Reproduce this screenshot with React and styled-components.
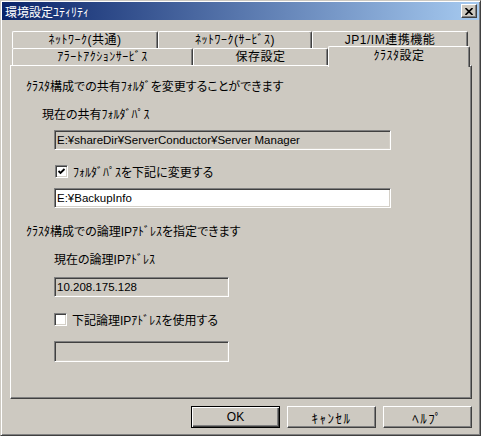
import React from 'react';
import styled, { createGlobalStyle, css } from 'styled-components';

const bg = '#cdc9c1';

const GlobalStyle = createGlobalStyle`
  html, body {
    margin: 0;
    padding: 0;
    background: ${bg};
  }
  body {
    font-family: "Liberation Sans", "Noto Sans CJK JP", sans-serif;
    font-size: 12px;
    font-feature-settings: "palt";
    color: #000;
  }
  * { box-sizing: border-box; }
`;

const Window = styled.div`
  width: 481px;
  height: 436px;
  display: flex;
  flex-direction: column;
  background: ${bg};
  border: 1px solid;
  border-color: ${bg} #404040 #404040 ${bg};
  box-shadow: inset 1px 1px #fff, inset -1px -1px #808080;
  padding: 1px;
`;

const TitleBar = styled.div`
  height: 18px;
  display: flex;
  align-items: center;
  justify-content: space-between;
  padding: 0 2px 0 3px;
  background: linear-gradient(to right, #0a246a, #a6caf0);
  color: #fff;
  font-size: 12px;
`;

const CloseButton = styled.div`
  width: 16px;
  height: 14px;
  display: flex;
  align-items: center;
  justify-content: center;
  background: ${bg};
  border: 1px solid;
  border-color: #fff #404040 #404040 #fff;
  box-shadow: inset -1px -1px #808080;
`;

const Body = styled.div`
  flex: 1;
  display: flex;
  flex-direction: column;
  padding: 11px 7px 0 8px;
`;

const TabRow = styled.div`
  display: flex;
  height: 17px;
  padding-left: 2px;
`;

const Tab = styled.div`
  width: ${p => p.$w}px;
  height: 17px;
  flex: none;
  text-align: center;
  line-height: 16px;
  letter-spacing: 0.5px;
  background: ${bg};
  border-top: 1px solid #fff;
  border-left: 1px solid #fff;
  border-right: 1px solid #404040;
  box-shadow: inset -1px 0 #808080;
  border-radius: 2px 2px 0 0;
  white-space: nowrap;
  ${p => p.$selected && css`
    position: relative;
    z-index: 1;
    height: 21px;
    margin-top: -2px;
    line-height: 18px;
  `}
`;

const Panel = styled.div`
  height: 334px;
  display: flex;
  flex-direction: column;
  padding: 14px 0 0 15px;
  border: 1px solid;
  border-color: #fff #404040 #404040 #fff;
  box-shadow: inset -1px -1px #808080;
`;

const Text = styled.div`
  height: 14px;
  line-height: 14px;
  white-space: nowrap;
  margin-top: ${p => p.$mt || 0}px;
  margin-left: ${p => p.$ml || 0}px;
`;

const Field = styled.div`
  width: ${p => p.$w}px;
  height: ${p => p.$h || 20}px;
  margin-top: ${p => p.$mt}px;
  margin-left: 28px;
  padding-left: 2px;
  font-size: 11.5px;
  line-height: 18px;
  white-space: nowrap;
  background: ${p => (p.$white ? '#fff' : bg)};
  border: 1px solid;
  border-color: #808080 #fff #fff #808080;
  box-shadow: inset 1px 1px #404040, inset -1px -1px #d4d0c8;
`;

const CheckRow = styled.label`
  display: flex;
  align-items: center;
  gap: 5px;
  height: 14px;
  margin-top: ${p => p.$mt}px;
  margin-left: ${p => p.$ml}px;
`;

const Box = styled.span`
  width: 13px;
  height: 13px;
  display: flex;
  align-items: center;
  justify-content: center;
  background: #fff;
  border: 1px solid;
  border-color: #808080 #fff #fff #808080;
  box-shadow: inset 1px 1px #404040, inset -1px -1px #d4d0c8;
`;

const ButtonRow = styled.div`
  display: flex;
  justify-content: flex-end;
  gap: 7px;
  margin-top: 7px;
`;

const Button = styled.div`
  width: 89px;
  height: 22px;
  display: flex;
  align-items: center;
  justify-content: center;
  font-size: ${p => (p.$spacing ? 13 : 12)}px;
  letter-spacing: ${p => p.$spacing || 0}px;
  background: ${bg};
  border: 1px solid;
  border-color: #fff #404040 #404040 #fff;
  box-shadow: inset -1px -1px #808080;
  ${p => p.$default && css`
    border-color: #000;
    box-shadow: inset 1px 1px #fff, inset -1px -1px #404040, inset -2px -2px #808080;
  `}
`;

function Checkbox({ checked, label, mt, ml }) {
  return (
    <CheckRow $mt={mt} $ml={ml}>
      <Box>
        {checked && (
          <svg width="9" height="9" viewBox="0 0 9 9">
            <path d="M1.5 4 L3.5 6 L7.5 2" fill="none" stroke="#000" strokeWidth="1.8" />
          </svg>
        )}
      </Box>
      <span>{label}</span>
    </CheckRow>
  );
}

export default function App() {
  return (
    <>
      <GlobalStyle />
      <Window>
        <TitleBar>
          <span>環境設定ﾕﾃｨﾘﾃｨ</span>
          <CloseButton>
            <svg width="8" height="7" viewBox="0 0 8 7">
              <path d="M0.5 0 L7.5 7 M7.5 0 L0.5 7" stroke="#000" strokeWidth="1.6" />
            </svg>
          </CloseButton>
        </TitleBar>
        <Body>
          <TabRow>
            <Tab $w={146}>ﾈｯﾄﾜｰｸ(共通)</Tab>
            <Tab $w={154}>ﾈｯﾄﾜｰｸ(ｻｰﾋﾞｽ)</Tab>
            <Tab $w={156}>JP1/IM連携機能</Tab>
          </TabRow>
          <TabRow>
            <Tab $w={181}>ｱﾗｰﾄｱｸｼｮﾝｻｰﾋﾞｽ</Tab>
            <Tab $w={135}>保存設定</Tab>
            <Tab $w={142} $selected>ｸﾗｽﾀ設定</Tab>
          </TabRow>
          <Panel>
            <Text>ｸﾗｽﾀ構成での共有ﾌｫﾙﾀﾞを変更することができます</Text>
            <Text $mt={14} $ml={16}>現在の共有ﾌｫﾙﾀﾞﾊﾟｽ</Text>
            <Field $w={337} $mt={8}>E:¥shareDir¥ServerConductor¥Server Manager</Field>
            <Checkbox checked mt={14} ml={29} label="ﾌｫﾙﾀﾞﾊﾟｽを下記に変更する" />
            <Field $w={337} $mt={10} $white>E:¥BackupInfo</Field>
            <Text $mt={17}>ｸﾗｽﾀ構成での論理IPｱﾄﾞﾚｽを指定できます</Text>
            <Text $mt={14} $ml={28}>現在の論理IPｱﾄﾞﾚｽ</Text>
            <Field $w={175} $mt={10}>10.208.175.128</Field>
            <Checkbox mt={15} ml={28} label="下記論理IPｱﾄﾞﾚｽを使用する" />
            <Field $w={175} $h={21} $mt={15} />
          </Panel>
          <ButtonRow>
            <Button $default>OK</Button>
            <Button $spacing={1.5}>ｷｬﾝｾﾙ</Button>
            <Button $spacing={1.5}>ﾍﾙﾌﾟ</Button>
          </ButtonRow>
        </Body>
      </Window>
    </>
  );
}
